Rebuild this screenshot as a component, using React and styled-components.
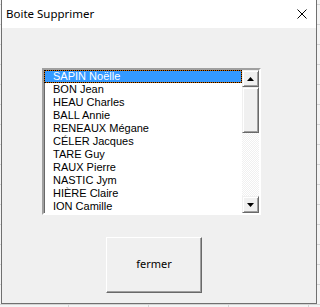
import React from "react";
import styled, { createGlobalStyle } from "styled-components";

const Global = createGlobalStyle`
  html, body { margin: 0; padding: 0; }
  body {
    width: 320px;
    height: 307px;
    overflow: hidden;
    background-color: #f4f4f4;
    background-image:
      linear-gradient(to right, #d4d4d4 1px, transparent 1px),
      linear-gradient(to bottom, #d4d4d4 1px, transparent 1px);
    background-size: 80px 20px;
    background-position: 68px 4px;
  }
`;

const Window = styled.div`
  margin-left: 1px;
  width: 314px;
  height: 303px;
  border: 1px solid #707070;
  border-top: none;
  background: #f0f0f0;
  display: flex;
  flex-direction: column;
  font-family: "Noto Sans", "Open Sans", sans-serif;
`;

const TitleBar = styled.div`
  height: 27px;
  flex: none;
  background: #fff;
  display: flex;
  align-items: center;
  justify-content: space-between;
  padding: 0 9px 1px 4px;
`;

const Title = styled.span`
  font-size: 11.5px;
  color: #000;
  line-height: 1;
`;

const CloseIcon = styled.svg`
  width: 10px;
  height: 10px;
  display: block;
`;

const Client = styled.div`
  flex: 1;
  display: flex;
  flex-direction: column;
  align-items: flex-start;
  padding: 40px 0 0 40px;
`;

const ListBox = styled.div`
  width: 215px;
  height: 143px;
  border-style: solid;
  border-width: 2px;
  border-color: #a0a0a0 #ffffff #ffffff #a0a0a0;
  box-shadow: inset 1px 1px 0 #696969;
  background: #fff;
  display: flex;
`;

const Items = styled.ul`
  list-style: none;
  margin: 0;
  padding: 0;
  flex: 1;
  overflow: hidden;
  font-family: "Liberation Sans", Arial, sans-serif;
  font-size: 11px;
`;

const Item = styled.li`
  height: 13px;
  line-height: 13px;
  box-sizing: border-box;
  padding-left: ${(p) => (p.$selected ? "8px" : "9px")};
  color: ${(p) => (p.$selected ? "#fff" : "#000")};
  white-space: nowrap;
  ${(p) =>
    p.$selected
      ? `border: 1px dotted #000;
         line-height: 11px;
         background: linear-gradient(#3399ff, #3399ff) padding-box, #cc6600 border-box;`
      : ""}
`;

const ScrollBar = styled.div`
  width: 17px;
  flex: none;
  display: flex;
  flex-direction: column;
  background-color: #fff;
  background-image: repeating-conic-gradient(#f0f0f0 0 25%, #ffffff 0 50%);
  background-size: 2px 2px;
`;

const Raised = styled.div`
  box-sizing: border-box;
  height: ${(p) => p.$h}px;
  flex: none;
  background: #f0f0f0;
  border-style: solid;
  border-width: 1px;
  border-color: #f0f0f0 #696969 #696969 #f0f0f0;
  box-shadow: inset 1px 1px 0 #ffffff, inset -1px -1px 0 #a0a0a0;
  display: flex;
  align-items: center;
  justify-content: center;
`;

const Track = styled.div`
  flex: 1;
`;

const Arrow = styled.svg`
  width: 7px;
  height: 4px;
  display: block;
`;

const CloseButton = styled.button`
  margin: 22px 0 0 64px;
  width: 96px;
  height: 56px;
  box-sizing: border-box;
  background: #f0f0f0;
  border-style: solid;
  border-width: 1px;
  border-color: #ffffff #696969 #696969 #ffffff;
  box-shadow: inset -1px -1px 0 #a0a0a0, inset 1px 1px 0 #f0f0f0;
  font-family: "Noto Sans", "Open Sans", sans-serif;
  font-size: 11px;
  color: #000;
  padding: 0 0 3px 0;
  cursor: default;
`;

const names = [
  "SAPIN Noëlle",
  "BON Jean",
  "HEAU Charles",
  "BALL Annie",
  "RENEAUX Mégane",
  "CÉLER Jacques",
  "TARE Guy",
  "RAUX Pierre",
  "NASTIC Jym",
  "HIÈRE Claire",
  "ION Camille",
];

export default function App() {
  return (
    <>
      <Global />
      <Window>
        <TitleBar>
          <Title>Boite Supprimer</Title>
          <CloseIcon viewBox="0 0 10 10">
            <path d="M0.5 0.5 L9.5 9.5 M9.5 0.5 L0.5 9.5" stroke="#000" strokeWidth="1" fill="none" />
          </CloseIcon>
        </TitleBar>
        <Client>
          <ListBox>
            <Items>
              {names.map((n, i) => (
                <Item key={n} $selected={i === 0}>
                  {n}
                </Item>
              ))}
            </Items>
            <ScrollBar>
              <Raised $h={17}>
                <Arrow viewBox="0 0 7 4">
                  <path d="M3.5 0 L7 4 L0 4 Z" fill="#000" />
                </Arrow>
              </Raised>
              <Raised $h={46} />
              <Track />
              <Raised $h={17}>
                <Arrow viewBox="0 0 7 4">
                  <path d="M0 0 L7 0 L3.5 4 Z" fill="#000" />
                </Arrow>
              </Raised>
            </ScrollBar>
          </ListBox>
          <CloseButton>fermer</CloseButton>
        </Client>
      </Window>
    </>
  );
}
